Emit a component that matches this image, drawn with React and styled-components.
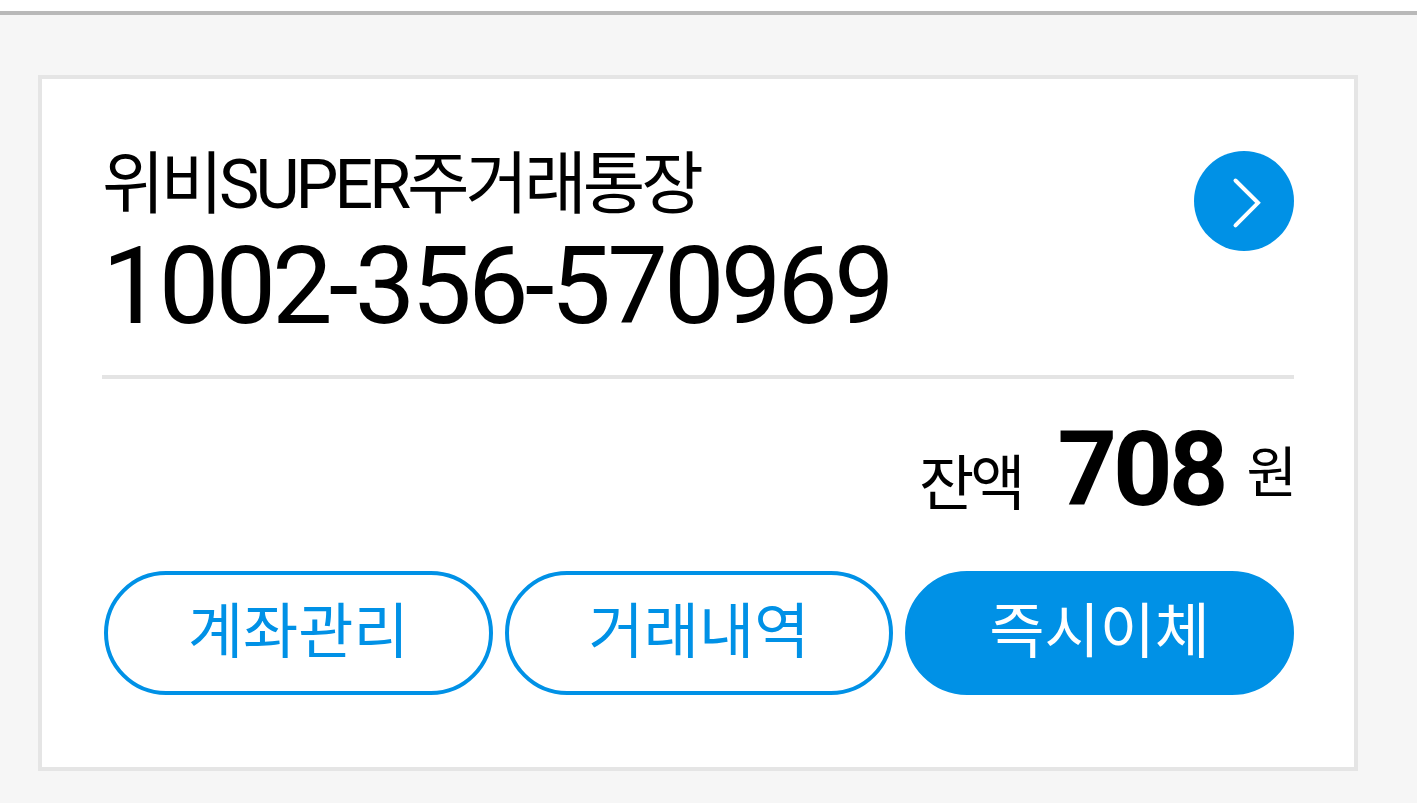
import React from 'react';
import styled, {createGlobalStyle} from 'styled-components';

const GlobalStyle = createGlobalStyle`
  * {
    box-sizing: border-box;
  }

  body {
    margin: 0;
    background: #f6f6f6;
    color: #000;
    font-family: Roboto, 'Noto Sans CJK KR', sans-serif;
    overflow: hidden;
  }
`;

const Page = styled.main`
  height: 803px;
  padding-top: 11px;
  background: linear-gradient(#fff 11px, #f6f6f6 11px);
`;

const Divider = styled.div`
  height: 4px;
  background: ${({$dark}) => ($dark ? '#b9b9b9' : '#e4e4e4')};
`;

const Card = styled.section`
  width: 1320px;
  height: 696px;
  margin: 60px 0 0 38px;
  padding: 60px 60px 0;
  border: 4px solid #e5e5e5;
  background: #fff;
`;

const Header = styled.header`
  display: flex;
  justify-content: space-between;
  height: 236px;
  padding-top: 12px;
`;

const AccountName = styled.h1`
  height: 72px;
  margin: 0;
  font-size: 68px;
  font-weight: 400;
  line-height: 68px;
  letter-spacing: -4px;
  white-space: nowrap;
`;

const AccountNumber = styled.div`
  margin-top: 3px;
  font-size: 108px;
  line-height: 120px;
  letter-spacing: -4px;
  white-space: nowrap;
`;

const DetailButton = styled.button`
  width: 100px;
  height: 100px;
  padding: 0;
  border: 0;
  border-radius: 50%;
  background: #0091e6;

  svg {
    display: block;
  }
`;

const Balance = styled.div`
  display: flex;
  justify-content: flex-end;
  height: 192px;
  padding-top: 30px;
`;

const Label = styled.span`
  margin: 46px 36px 0 0;
  font-size: 60px;
  line-height: 60px;
  letter-spacing: -4px;
`;

const Amount = styled.strong`
  margin-right: 22px;
  font-size: 104px;
  font-weight: 700;
  line-height: 122px;
  letter-spacing: -4px;
`;

const Unit = styled.span`
  margin-top: 34px;
  font-size: 55px;
  line-height: 60px;
  letter-spacing: -3px;
`;

const Actions = styled.div`
  display: flex;
  gap: 12px;
  padding-left: 2px;
`;

const ActionButton = styled.button`
  flex: 1;
  height: 124px;
  padding: 0;
  border: 4px solid #0091e6;
  border-radius: 62px;
  background: ${({$primary}) => ($primary ? '#0091e6' : '#fff')};
  color: ${({$primary}) => ($primary ? '#fff' : '#0091e6')};
  font-family: inherit;
  font-size: 60px;
  line-height: 1;
`;

const actions = ['계좌관리', '거래내역', '즉시이체'];

const App = () => (
  <>
    <GlobalStyle />
    <Page>
      <Divider $dark />
      <Card>
        <Header>
          <div>
            <AccountName>위비SUPER주거래통장</AccountName>
            <AccountNumber>1002-356-570969</AccountNumber>
          </div>
          <DetailButton aria-label="계좌 상세">
            <svg width="100" height="100" viewBox="0 0 100 100" fill="none">
              <path
                d="M41.5 29.5 64 51.8 41.5 74.3"
                stroke="#fff"
                strokeWidth="4"
                strokeLinecap="round"
              />
            </svg>
          </DetailButton>
        </Header>
        <Divider />
        <Balance>
          <Label>잔액</Label>
          <Amount>708</Amount>
          <Unit>원</Unit>
        </Balance>
        <Actions>
          {actions.map((item, i) => (
            <ActionButton key={item} $primary={i === 2}>
              {item}
            </ActionButton>
          ))}
        </Actions>
      </Card>
    </Page>
  </>
);

export default App;
